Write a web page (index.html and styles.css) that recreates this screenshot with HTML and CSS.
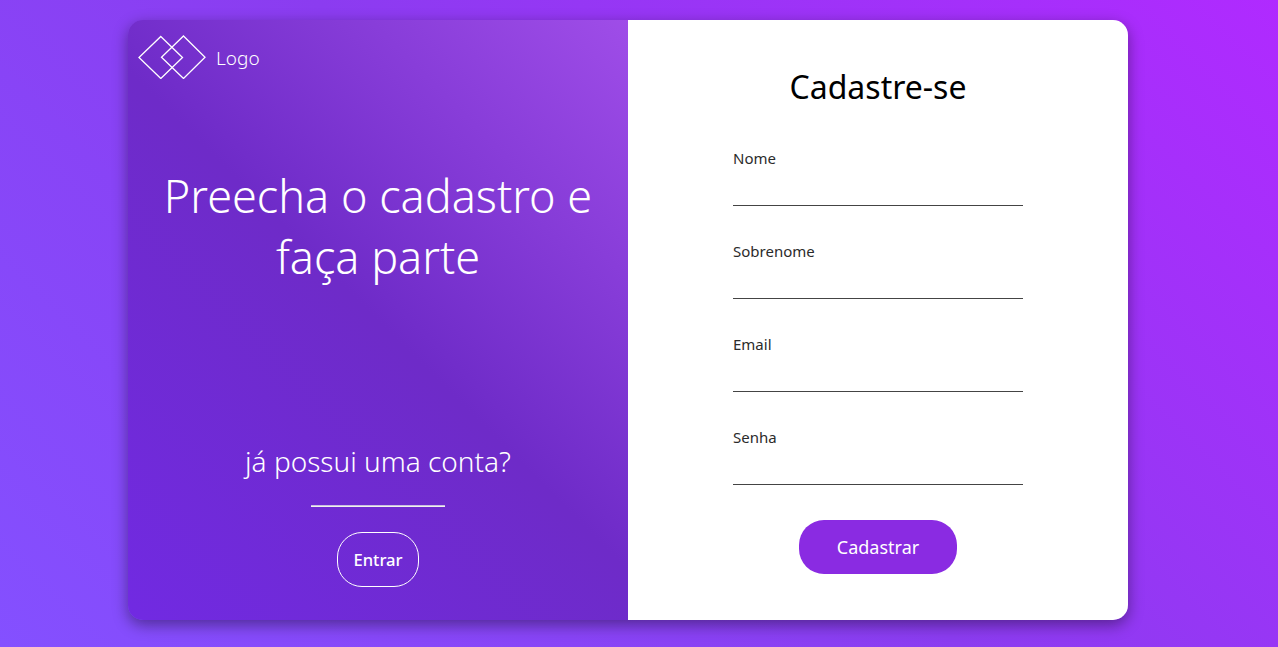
FILE: index.html
```html
<!DOCTYPE html>
<html lang="pt-br">
<head>
<meta charset="utf-8">
<title>Cadastro</title>
<link rel="stylesheet" href="styles.css">
</head>
<body>
<main class="card">
  <section class="intro">
    <header class="brand">
      <svg class="brand-mark" width="68" height="44" viewBox="0 0 68 44" fill="none" stroke="#fff" stroke-width="1.3"><path d="M22.800 1.500 44.500 22.500 22.800 43.500 1 22.500Z"/><path d="M45.500 1 67 22.200 45.500 43.500 23.500 22.200Z"/></svg>
      <span>Logo</span>
    </header>
    <h1 class="headline">Preecha o cadastro e faça parte</h1>
    <div class="login">
      <p class="question">já possui uma conta?</p>
      <div class="rule"></div>
      <button class="enter">Entrar</button>
    </div>
  </section>
  <form class="signup">
    <h2 class="title">Cadastre-se</h2>
    <label class="field">Nome<input type="text"></label>
    <label class="field">Sobrenome<input type="text"></label>
    <label class="field">Email<input type="email"></label>
    <label class="field">Senha<input type="password"></label>
    <button class="submit" type="button">Cadastrar</button>
  </form>
</main>
</body>
</html>
```
FILE: styles.css
```css
* { box-sizing: border-box; margin: 0; padding: 0; }
body {
  height: 647px;
  padding: 20px 0 0 128px;
  overflow: hidden;
  font-family: "Noto Sans", sans-serif;
  background: linear-gradient(45deg, #8450ff, #8b3cf0 50%, #b02aff);
}
.card {
  display: flex;
  width: 1000px;
  height: 600px;
  border-radius: 15px;
  box-shadow: 0 5px 15px rgba(0, 0, 0, .4);
}
.intro {
  width: 500px;
  display: flex;
  flex-direction: column;
  align-items: center;
  border-radius: 15px 0 0 15px;
  color: #fff;
  font-weight: 300;
  background: linear-gradient(45deg, #712ae2, #6e2bc8 50%, #9f4de8);
}
.brand {
  align-self: stretch;
  display: flex;
  align-items: center;
  gap: 10px;
  padding: 15px 10px 0;
  font-size: 19px;
}
.brand span { padding-top: 2px; }
.brand-mark { display: block; }
.headline {
  width: 450px;
  margin-top: 86px;
  font-size: 45px;
  line-height: 61px;
  font-weight: 300;
  text-align: center;
}
.login {
  margin-top: 155px;
  display: flex;
  flex-direction: column;
  align-items: center;
}
.question { font-size: 28px; line-height: 38px; }
.rule { width: 134px; height: 2px; margin: 25px 0; border-top: 1px solid #c9bfe0; border-bottom: 1px solid #f1f1ee; }
.enter {
  width: 82px;
  height: 55px;
  border: 1px solid #fff;
  border-radius: 25px;
  background: none;
  color: #fff;
  font: 500 16.6px "Noto Sans", sans-serif;
}
.signup {
  width: 500px;
  display: flex;
  flex-direction: column;
  align-items: center;
  border-radius: 0 15px 15px 0;
  background: #fff;
}
.title { margin: 45px 0 39px; font-size: 32px; line-height: 44px; font-weight: 400; }
.field {
  display: block;
  width: 290px;
  height: 58px;
  margin-bottom: 35px;
  color: #2b2b2b;
  font-size: 15px;
  line-height: 21px;
}
.field input {
  display: block;
  width: 100%;
  height: 37px;
  border: 0;
  border-bottom: 1px solid #444;
  outline: 0;
}
.submit {
  width: 158px;
  height: 54px;
  border: 0;
  border-radius: 25px;
  background: #8a2be2;
  color: #fff;
  font: 400 18px "Noto Sans", sans-serif;
}
```
